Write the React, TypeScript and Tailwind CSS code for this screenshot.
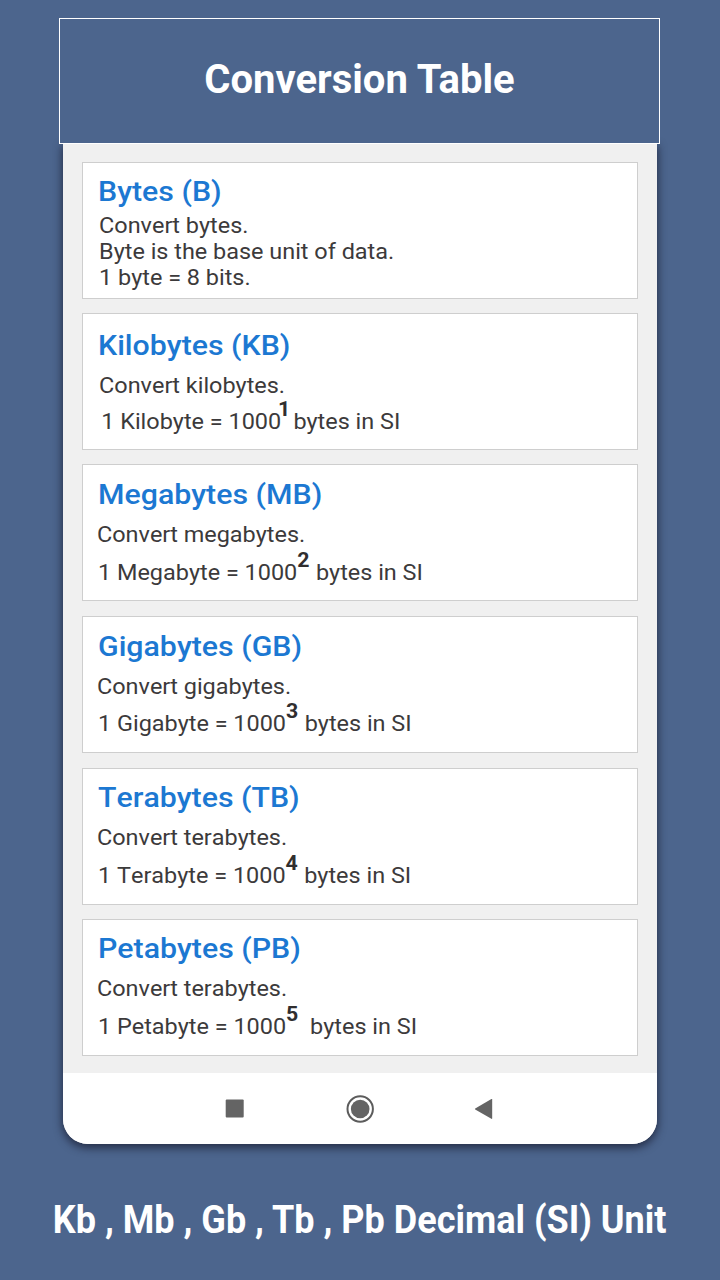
import type { ReactNode } from "react";

type UnitCardProps = {
    title: string;
    className?: string;
    children: ReactNode;
};

const UnitCard = ({ title, className = "", children }: UnitCardProps) => (
    <section
        className={`h-[137px] shrink-0 border border-[#cecece] bg-white pl-[15px] text-[22px] leading-[26px] text-[#3c3a3b] whitespace-pre [font-kerning:none] ${className}`}
    >
        <h2 className="w-max origin-left scale-x-[1.122] text-[27px] leading-8 font-medium text-[#1c78d2]">
            {title}
        </h2>
        {children}
    </section>
);

type PowerLineProps = {
    unit: string;
    power: number;
    className?: string;
    supClass?: string;
};

const PowerLine = ({
    unit,
    power,
    className = "",
    supClass = "",
}: PowerLineProps) => (
    <p className={`h-[26px] w-max origin-left scale-x-[1.065] ${className}`}>
        1 {unit} = 1000
        <span
            className={`text-[20px] leading-[0] font-bold text-[#302e2f] [vertical-align:13px] ${supClass}`}
        >
            {power}
        </span>
        bytes in SI
    </p>
);

const NavigationBar = () => (
    <nav className="flex h-[71px] items-center justify-center bg-white">
        <svg width="300" height="40" viewBox="0 0 300 40" fill="#646464">
            <rect x="15.7" y="10.5" width="18" height="18" rx="1" />
            <circle
                cx="150.2"
                cy="20"
                r="12.7"
                fill="none"
                stroke="#5c5c5c"
                strokeWidth="2"
            />
            <circle cx="150.2" cy="20" r="9.3" />
            <path d="M281.4 10Q282.2 9.6 282.2 10.6V29.2Q282.2 30.2 281.4 29.8L265.2 20.4Q264.7 20 265.2 19.6Z" />
        </svg>
    </nav>
);

const App = () => (
    <div className="flex h-[1280px] w-[720px] flex-col items-center overflow-hidden bg-[#4c658d] pt-[18px] font-[Roboto,sans-serif]">
        <header className="z-10 mr-px flex h-[126px] w-[601px] shrink-0 items-center justify-center border border-white bg-[#4c658d] pb-[2px]">
            <h1 className="text-[40px] leading-[48px] font-bold whitespace-nowrap text-white">
                Conversion Table
            </h1>
        </header>

        <main className="h-[1000px] w-[594px] shrink-0 overflow-hidden rounded-b-[25px] bg-[#f0f0f0] shadow-[0_3px_9px_1px_rgba(25,30,50,0.75)]">
            <div className="flex h-[929px] flex-col px-[19px] pt-[18px]">
                <UnitCard title="Bytes (B)" className="pt-[13px]">
                    <div className="mt-[5px] w-max origin-left scale-x-[1.065] pl-px">
                        <p>Convert bytes.</p>
                        <p>Byte is the base unit of data.</p>
                        <p>1 byte = 8 bits.</p>
                    </div>
                </UnitCard>
                <UnitCard title="Kilobytes (KB)" className="mt-[14px] pt-4">
                    <p className="mt-[11px] w-max origin-left scale-x-[1.065] pl-px">
                        Convert kilobytes.
                    </p>
                    <PowerLine
                        unit="Kilobyte"
                        power={1}
                        className="mt-[10px] pl-[3px]"
                        supClass="-ml-[3px] mr-[3px]"
                    />
                </UnitCard>
                <UnitCard
                    title="Megabytes (MB)"
                    className="mt-[14px] pt-[14px]"
                >
                    <p className="mt-[11px] -ml-[1.5px] w-max origin-left scale-x-[1.065]">
                        Convert megabytes.
                    </p>
                    <PowerLine
                        unit="Megabyte"
                        power={2}
                        className="mt-3"
                        supClass="mr-[6px]"
                    />
                </UnitCard>
                <UnitCard
                    title="Gigabytes (GB)"
                    className="mt-[15px] pt-[14px]"
                >
                    <p className="mt-[11px] -ml-[1.5px] w-max origin-left scale-x-[1.065]">
                        Convert gigabytes.
                    </p>
                    <PowerLine
                        unit="Gigabyte"
                        power={3}
                        className="mt-[11px]"
                        supClass="mr-[6px]"
                    />
                </UnitCard>
                <UnitCard
                    title="Terabytes (TB)"
                    className="mt-[15px] pt-[13px]"
                >
                    <p className="mt-[11px] -ml-[1.5px] w-max origin-left scale-x-[1.065]">
                        Convert terabytes.
                    </p>
                    <PowerLine
                        unit="Terabyte"
                        power={4}
                        className="mt-3"
                        supClass="mr-[6px]"
                    />
                </UnitCard>
                <UnitCard
                    title="Petabytes (PB)"
                    className="mt-[14px] pt-[13px]"
                >
                    <p className="mt-[11px] -ml-[1.5px] w-max origin-left scale-x-[1.065]">
                        Convert terabytes.
                    </p>
                    <PowerLine
                        unit="Petabyte"
                        power={5}
                        className="mt-3"
                        supClass="mr-[11px]"
                    />
                </UnitCard>
            </div>
            <NavigationBar />
        </main>

        <footer className="mt-[52px] scale-x-[0.948] text-[38px] leading-[48px] font-bold whitespace-nowrap text-white">
            Kb , Mb , Gb , Tb , Pb Decimal (SI) Unit
        </footer>
    </div>
);

export default App;
